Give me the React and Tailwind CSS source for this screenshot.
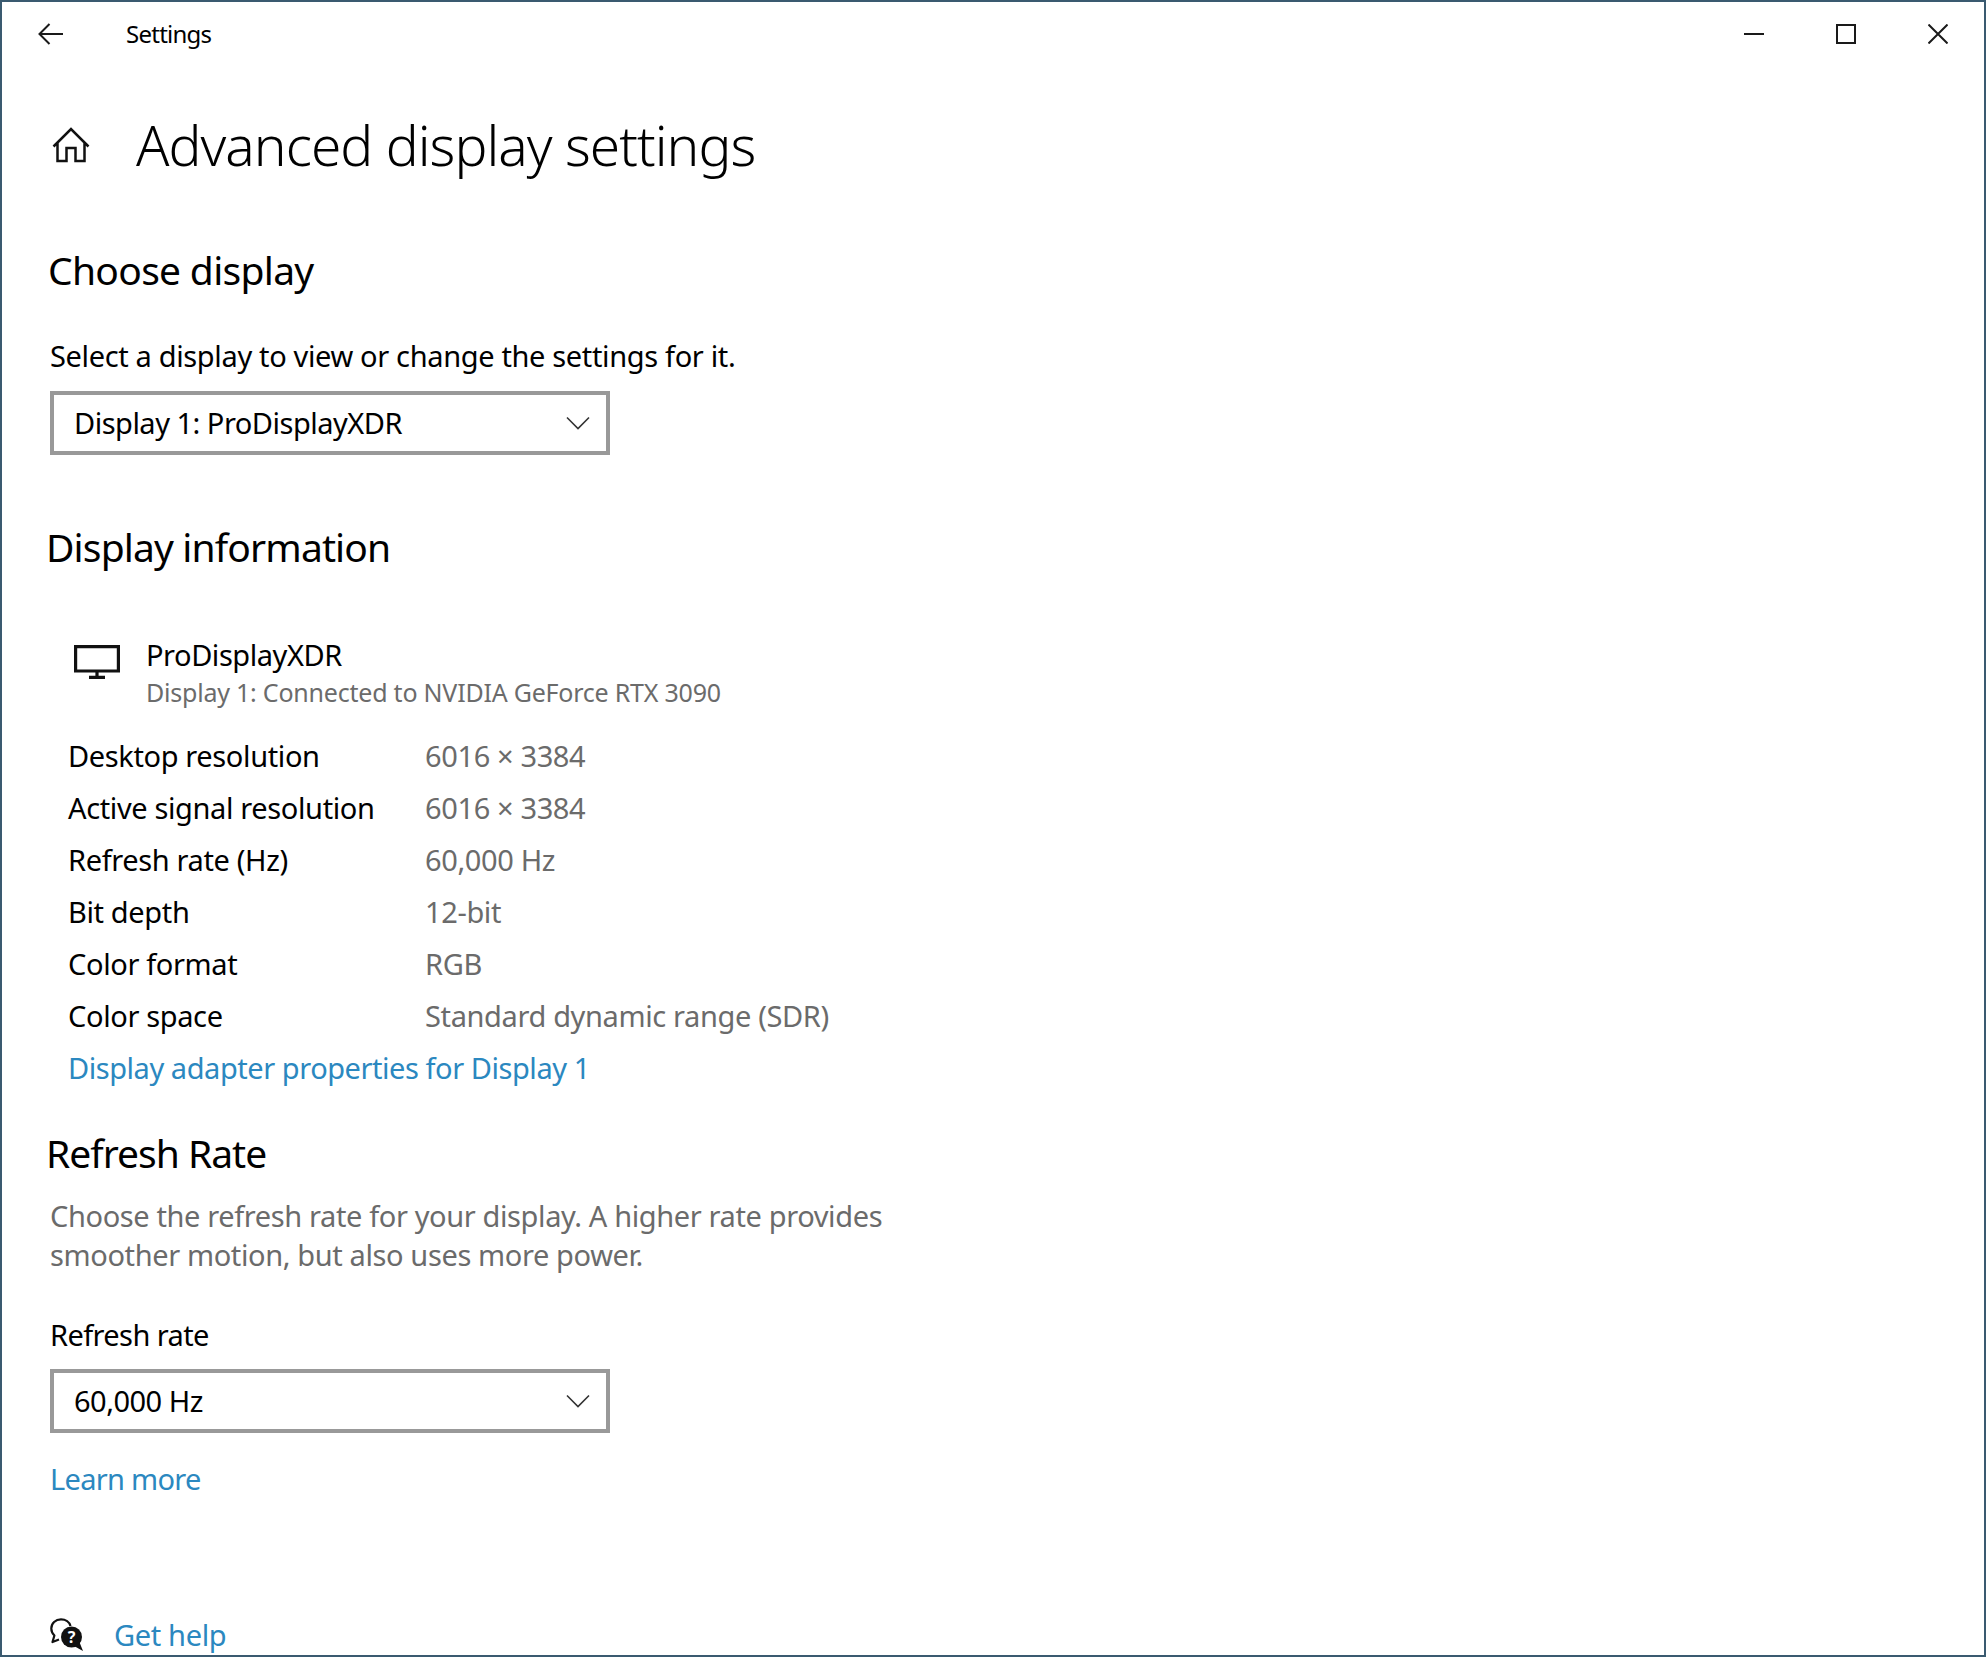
import React from "react";

const Chevron = () => (
  <svg width="24" height="14" viewBox="0 0 24 14" fill="none" stroke="#333" strokeWidth="1.6"><path d="M1 1.5 L12 12.5 L23 1.5" /></svg>
);

const Drop = ({ children }) => (
  <div className="w-[560px] h-[64px] border-[4px] border-[#999999] flex items-center justify-between pl-[20px] pr-[16px] text-[29px] text-black tracking-[-0.5px]">
    <span>{children}</span>
    <Chevron />
  </div>
);

const rows = [
  ["Desktop resolution", "6016 × 3384"],
  ["Active signal resolution", "6016 × 3384"],
  ["Refresh rate (Hz)", "60,000 Hz"],
  ["Bit depth", "12-bit"],
  ["Color format", "RGB"],
  ["Color space", "Standard dynamic range (SDR)"],
];

export default function App() {
  return (
    <div className="w-[1986px] h-[1657px] bg-white border-2 border-[#3a5a70] overflow-hidden flex flex-col font-['Noto_Sans','Open_Sans',sans-serif] text-black">
      <div className="h-[66px] flex items-center justify-between shrink-0">
        <div className="flex items-center">
          <svg className="ml-[36px] -mt-[2px]" width="26" height="22" viewBox="0 0 26 22" fill="none" stroke="#1a1a1a" strokeWidth="2"><path d="M25 11 H2 M11.5 1 L1.5 11 L11.5 21" /></svg>
          <span className="ml-[62px] -mt-[2px] text-[24px] tracking-[-0.75px]">Settings</span>
        </div>
        <div className="flex items-center mr-[36px] gap-[72px] -mt-[2px]">
          <svg width="20" height="20" viewBox="0 0 20 20" fill="none" stroke="#1a1a1a" strokeWidth="2"><path d="M0 10 H20" /></svg>
          <svg width="20" height="20" viewBox="0 0 20 20" fill="none" stroke="#1a1a1a" strokeWidth="2"><rect x="1" y="1" width="18" height="18" /></svg>
          <svg width="20" height="20" viewBox="0 0 20 20" fill="none" stroke="#1a1a1a" strokeWidth="2"><path d="M0.5 0.5 L19.5 19.5 M19.5 0.5 L0.5 19.5" /></svg>
        </div>
      </div>

      <div className="flex items-center mt-[39px] h-[76px] pl-[50px]">
        <svg width="38" height="36" viewBox="0 0 38 36" fill="none" stroke="#111" strokeWidth="2.5"><path d="M1.5 19.5 L19 2 L36.5 19.5 M5.5 15 V34 H14.5 V21 H23.5 V34 H32.5 V15" /></svg>
        <h1 className="ml-[46px] text-[55px] leading-[76px] font-light tracking-[-0.95px]">Advanced display settings</h1>
      </div>

      <h2 className="ml-[46px] mt-[61px] text-[39px] leading-[52px] tracking-[-0.7px]">Choose display</h2>
      <p className="ml-[48px] mt-[40px] text-[29px] leading-[40px] tracking-[-0.35px]">Select a display to view or change the settings for it.</p>
      <div className="ml-[48px] mt-[15px]"><Drop>Display 1: ProDisplayXDR</Drop></div>

      <h2 className="ml-[44px] mt-[66px] text-[39px] leading-[52px] tracking-[-0.86px]">Display information</h2>

      <div className="flex ml-[72px] mt-[62px]">
        <svg className="mt-[10px]" width="46" height="34" viewBox="0 0 46 34" fill="none" stroke="#111" strokeWidth="3.2"><path d="M1.6 1.6 H44.4 V26 H1.6 Z M23 26 V32.4 M15 32.4 H31" /></svg>
        <div className="ml-[26px]">
          <div className="text-[29px] leading-[40px] tracking-[-0.45px]">ProDisplayXDR</div>
          <div className="text-[25px] leading-[34px] text-[#6b6b6b] tracking-[-0.22px]">Display 1: Connected to NVIDIA GeForce RTX 3090</div>
        </div>
      </div>

      <div className="ml-[66px] mt-[21px] flex flex-col">
        {rows.map(([k, v]) => (
          <div key={k} className="flex h-[52px] items-center text-[29px] tracking-[-0.37px]">
            <span className="w-[357px]">{k}</span>
            <span className="text-[#6b6b6b]">{v}</span>
          </div>
        ))}
        <div className="h-[52px] flex items-center text-[29px] text-[#2b88c0] tracking-[-0.45px]">Display adapter properties for Display 1</div>
      </div>

      <h2 className="ml-[44px] mt-[33px] text-[39px] leading-[52px] tracking-[-1px]">Refresh Rate</h2>
      <p className="ml-[48px] mt-[17px] w-[880px] text-[29px] leading-[39px] text-[#6b6b6b] tracking-[-0.38px]">Choose the refresh rate for your display. A higher rate provides smoother motion, but also uses more power.</p>
      <p className="ml-[48px] mt-[41px] text-[29px] leading-[40px] tracking-[-0.6px]">Refresh rate</p>
      <div className="ml-[48px] mt-[14px]"><Drop>60,000 Hz</Drop></div>
      <p className="ml-[48px] mt-[26px] text-[29px] leading-[40px] text-[#2b88c0] tracking-[-0.7px]">Learn more</p>

      <div className="flex items-center ml-[48px] mt-[114px]">
        <svg width="34" height="34" viewBox="0 0 34 34">
          <path d="M9 21.5 L2.5 24 L4.4 17.5 C2.4 15.5 1.3 13 1.3 10.5 C1.3 5.5 5.5 1.3 11 1.3 C15.5 1.3 19.5 4 20.5 8" fill="none" stroke="#111" strokeWidth="2.2" strokeLinejoin="round" />
          <circle cx="21.5" cy="19" r="10.5" fill="#111" />
          <path d="M24 28 L33 33 L29 23 Z" fill="#111" />
          <text x="21.5" y="25" textAnchor="middle" fontSize="16" fontWeight="700" fill="#fff">?</text>
        </svg>
        <span className="ml-[30px] text-[29px] text-[#2b88c0] tracking-[-0.35px]">Get help</span>
      </div>
    </div>
  );
}
